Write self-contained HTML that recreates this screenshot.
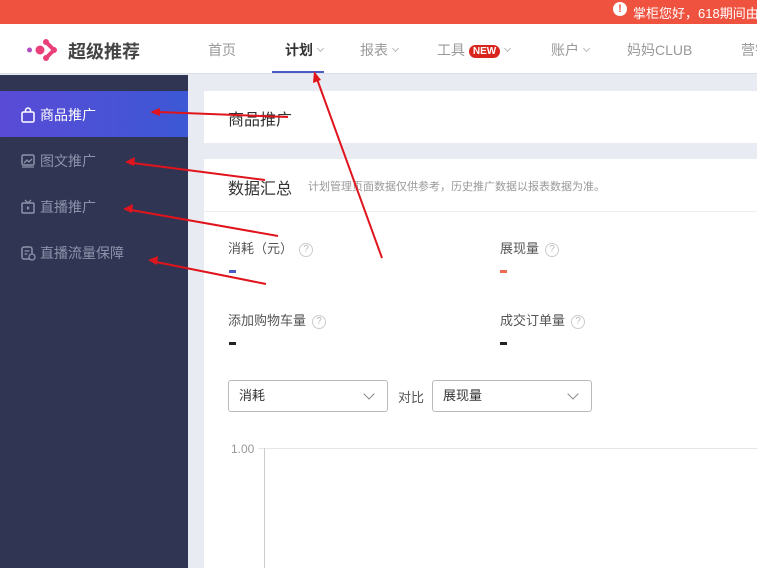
<!DOCTYPE html>
<html><head><meta charset="utf-8"><style>
*{margin:0;padding:0;box-sizing:border-box}
html,body{width:757px;height:568px;overflow:hidden}
body{position:relative;background:#e9ebf2;font-family:"Liberation Sans","Noto Sans CJK SC",sans-serif}
.top{position:absolute;left:0;top:0;width:757px;height:24px;background:#ef5340;color:#fff;font-size:12px}
.nav{position:absolute;left:0;top:24px;width:757px;height:50px;background:#fff;border-bottom:1px solid #dcdfe8;overflow:hidden}
.nav .it{position:absolute;top:16px;font-size:14px;color:#999;white-space:nowrap}
.chev{display:inline-block;width:5px;height:5px;border-right:1px solid #bbb;border-bottom:1px solid #bbb;transform:rotate(45deg);margin-left:5px;vertical-align:4px}
.side{position:absolute;left:0;top:75px;width:188px;height:493px;background:#2f3552}
.si{position:absolute;left:20px;font-size:14px;color:#8d93ab;display:flex;align-items:center}
.si svg{margin-right:4px}
.card{position:absolute;background:#fff;left:204px;width:560px}
.lbl{position:absolute;font-size:13px;color:#555;white-space:nowrap}
.q{display:inline-block;width:14px;height:14px;border:1px solid #ccc;border-radius:50%;font-size:10px;color:#bbb;text-align:center;line-height:12px;margin-left:6px;vertical-align:1px}
.dash{position:absolute;width:7px;height:3px}
.sel{position:absolute;top:380px;height:32px;border:1px solid #bbb;border-radius:3px;font-size:13px;color:#333;padding:0 10px;line-height:30px}
.sel i{position:absolute;right:14px;top:9px;width:8px;height:8px;border-right:1.5px solid #888;border-bottom:1.5px solid #888;transform:rotate(45deg)}
</style></head><body>
<div class="top"><span style="position:absolute;left:613px;top:2px;width:14px;height:14px;border-radius:50%;background:#fff;color:#ef5340;font-size:11px;font-weight:bold;text-align:center;line-height:14px">!</span><span style="position:absolute;left:633px;top:3px;white-space:nowrap;font-size:13px">掌柜您好，618期间由于</span></div>
<div class="nav">
<svg style="position:absolute;left:26px;top:14px" width="36" height="24"><circle cx="3.5" cy="12" r="2.5" fill="#b04ec0"/><circle cx="14" cy="12" r="4.5" fill="#ea3f78"/><circle cx="20" cy="4" r="3" fill="#ea3f78"/><circle cx="20" cy="20" r="3" fill="#ea3f78"/><circle cx="28" cy="12" r="3" fill="#ea3f78"/><path d="M20 4L28 12L20 20" stroke="#ea3f78" stroke-width="4" fill="none"/></svg>
<span style="position:absolute;left:68px;top:14px;font-size:18px;font-weight:bold;color:#444">超级推荐</span>
<span class="it" style="left:208px">首页</span>
<span class="it" style="left:285px;color:#333;font-weight:bold">计划<span class="chev"></span></span>
<div style="position:absolute;left:272px;top:47px;width:52px;height:3px;background:#4a5bc4"></div>
<span class="it" style="left:360px">报表<span class="chev"></span></span>
<span class="it" style="left:437px">工具 <span style="display:inline-block;background:#d9261c;color:#fff;font-size:10px;font-weight:bold;border-radius:8px;padding:1px 4px;vertical-align:1px">NEW</span><span class="chev"></span></span>
<span class="it" style="left:551px">账户<span class="chev"></span></span>
<span class="it" style="left:627px">妈妈CLUB</span>
<span class="it" style="left:741px">营销</span>
</div>
<div class="side">
<div style="position:absolute;left:0;top:16px;width:188px;height:46px;background:linear-gradient(90deg,#5a4bd6,#3c58d4)"></div>
<div class="si" style="top:30px;color:#fff"><svg width="16" height="16"><rect x="2" y="5" width="12" height="10" rx="1.5" fill="none" stroke="#fff" stroke-width="1.5"/><path d="M5.5 5V3.5a2.5 2.5 0 015 0V5" fill="none" stroke="#fff" stroke-width="1.5"/></svg>商品推广</div>
<div class="si" style="top:76px"><svg width="16" height="16"><rect x="2" y="2" width="12" height="10" rx="1.5" fill="none" stroke="#8d93ab" stroke-width="1.5"/><path d="M4 10l3-3 2 2 3-3M2 14h12" fill="none" stroke="#8d93ab" stroke-width="1.3"/></svg>图文推广</div>
<div class="si" style="top:122px"><svg width="16" height="16"><rect x="2" y="4" width="12" height="10" rx="1" fill="none" stroke="#8d93ab" stroke-width="1.5"/><path d="M5 1l3 3 3-3" fill="none" stroke="#8d93ab" stroke-width="1.3"/><path d="M7 7v4l3-2z" fill="#8d93ab"/></svg>直播推广</div>
<div class="si" style="top:168px"><svg width="16" height="16"><rect x="2" y="2" width="10" height="12" rx="2" fill="none" stroke="#8d93ab" stroke-width="1.5"/><path d="M4.5 6h5M4.5 9h3" stroke="#8d93ab" stroke-width="1.3"/><circle cx="12" cy="12" r="3" fill="#2f3552" stroke="#8d93ab" stroke-width="1.3"/></svg>直播流量保障</div>
</div>
<div class="card" style="top:91px;height:52px"><span style="position:absolute;left:24px;top:15px;font-size:16px;color:#333">商品推广</span></div>
<div class="card" style="top:159px;height:409px">
<span style="position:absolute;left:24px;top:16px;font-size:16px;color:#333">数据汇总</span>
<span style="position:absolute;left:104px;top:19px;font-size:11px;color:#999;white-space:nowrap">计划管理页面数据仅供参考，历史推广数据以报表数据为准。</span>
<div style="position:absolute;left:0;top:52px;width:560px;height:1px;background:#eceef3"></div>
</div>
<span class="lbl" style="left:228px;top:238px">消耗（元）<span class="q">?</span></span>
<div class="dash" style="left:229px;top:270px;background:#4a5bc4"></div>
<span class="lbl" style="left:500px;top:238px">展现量<span class="q">?</span></span>
<div class="dash" style="left:500px;top:270px;background:#ef6a52"></div>
<span class="lbl" style="left:228px;top:310px">添加购物车量<span class="q">?</span></span>
<div class="dash" style="left:229px;top:342px;background:#222"></div>
<span class="lbl" style="left:500px;top:310px">成交订单量<span class="q">?</span></span>
<div class="dash" style="left:500px;top:342px;background:#222"></div>
<div class="sel" style="left:228px;width:160px">消耗<i></i></div>
<span class="lbl" style="left:398px;top:387px">对比</span>
<div class="sel" style="left:432px;width:160px">展现量<i></i></div>
<span style="position:absolute;left:231px;top:442px;font-size:12px;color:#999">1.00</span>
<div style="position:absolute;left:258px;top:448px;width:500px;height:1px;background:#e6e6e6"></div>
<div style="position:absolute;left:264px;top:448px;width:1px;height:120px;background:#ccc"></div>
<svg style="position:absolute;left:0;top:0" width="757" height="568"><g stroke="#e0141c" stroke-width="2" fill="#e0141c">
<line x1="288" y1="117" x2="158" y2="112"/><path d="M150 112l10-4v8z" stroke="none"/>
<line x1="265" y1="180" x2="133" y2="163"/><path d="M125 162l10-5-1 9z" stroke="none"/>
<line x1="278" y1="236" x2="131" y2="210"/><path d="M123 209l10-5-1 9z" stroke="none"/>
<line x1="266" y1="284" x2="156" y2="262"/><path d="M148 260l10-4-1 9z" stroke="none"/>
<line x1="382" y1="258" x2="317" y2="79"/><path d="M314 71l7 9-8 3z" stroke="none"/>
</g></svg>
</body></html>
